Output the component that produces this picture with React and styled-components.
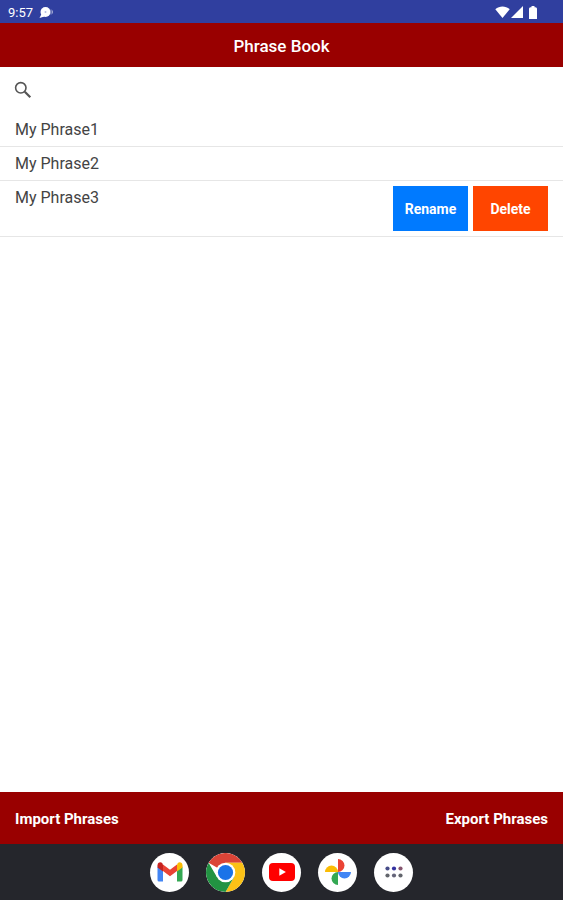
import React, { useState } from "react";
import styled, { createGlobalStyle } from "styled-components";

const GlobalStyle = createGlobalStyle`
  *, *::before, *::after { box-sizing: border-box; }
  body {
    margin: 0;
    background: #fff;
    color: #444;
    font-family: Roboto, "Liberation Sans", sans-serif;
    font-size: 16px;
  }
  button, input { font: inherit; }
`;

const Screen = styled.div`
  display: flex;
  flex-direction: column;
  min-height: 100vh;
`;

const StatusBar = styled.div`
  display: flex;
  align-items: center;
  justify-content: space-between;
  height: 23px;
  padding: 1px 26px 0 8px;
  background: #303f9f;
  color: #fff;
  font-size: 13px;
`;

const StatusGroup = styled.div`
  display: flex;
  align-items: center;
  gap: ${({ $gap }) => $gap}px;

  svg { display: block; }
`;

const Header = styled.header`
  display: flex;
  align-items: center;
  justify-content: center;
  height: 44px;
  padding-top: 2px;
  background: #990000;
  color: #fff;
`;

const Title = styled.h1`
  margin: 0;
  font-size: 17px;
  font-weight: 500;
  line-height: 24px;
`;

const SearchBar = styled.label`
  display: flex;
  align-items: center;
  gap: 8px;
  height: 46px;
  padding: 0 14px;

  svg { flex: none; }
`;

const SearchInput = styled.input`
  flex: 1;
  min-width: 0;
  border: 0;
  outline: 0;
  background: transparent;
  color: inherit;
`;

const PhraseList = styled.ul`
  flex: 1;
  margin: 0;
  padding: 0;
  list-style: none;
`;

const PhraseRow = styled.li`
  display: flex;
  align-items: flex-start;
  justify-content: space-between;
  padding: 5px 15px;
  border-bottom: 1px solid #e6e6e6;
`;

const PhraseName = styled.span`
  line-height: 23px;
`;

const RowActions = styled.div`
  display: flex;
  gap: 5px;
`;

const ActionButton = styled.button`
  width: 75px;
  height: 45px;
  padding: 0;
  border: 0;
  background: ${({ $color }) => $color};
  color: #fff;
  font-size: 14px;
  font-weight: 700;
`;

const Footer = styled.footer`
  display: flex;
  align-items: center;
  justify-content: space-between;
  height: 52px;
  padding: 2px 15px 0;
  background: #990000;
`;

const FooterButton = styled.button`
  padding: 0;
  border: 0;
  background: transparent;
  color: #fff;
  font-size: 15px;
  font-weight: 700;
  line-height: 24px;
`;

const Dock = styled.nav`
  display: flex;
  align-items: center;
  justify-content: center;
  gap: 17px;
  height: 56px;
  background: #25262c;
`;

const DockButton = styled.button`
  display: grid;
  place-items: center;
  width: 39px;
  height: 39px;
  padding: 0;
  overflow: hidden;
  border: 0;
  border-radius: 50%;
  background: #fff;

  svg { display: block; }
`;

const NotificationIcon = () => (
  <svg width="14" height="13" viewBox="0 0 14 13" fill="#fff" aria-hidden="true">
    <circle cx="6.5" cy="6" r="5" />
    <path d="M2.5 8 0.5 12 5.5 10.5z" />
    <circle cx="6.5" cy="6" r="1" fill="#b5bbdf" />
    <path d="M12 3.500v5M13.500 4.500v3" stroke="#98a0cf" strokeWidth="1" />
  </svg>
);

const WifiIcon = () => (
  <svg width="15" height="12" viewBox="0 0 15 12" fill="#fff" aria-hidden="true">
    <path d="M.3 3.2C4.5-.5 10.5-.5 14.7 3.2L7.5 12z" />
  </svg>
);

const SignalIcon = () => (
  <svg width="12" height="12" viewBox="0 0 12 12" fill="#fff" aria-hidden="true">
    <path d="M12 0v12H0z" />
  </svg>
);

const BatteryIcon = () => (
  <svg width="8" height="13" viewBox="0 0 8 13" fill="#fff" aria-hidden="true">
    <path d="M2.5 0h3v1.3h1Q8 1.3 8 2.8V13H0V2.8Q0 1.3 1.5 1.3h1z" />
  </svg>
);

const SearchIcon = () => (
  <svg width="18" height="18" viewBox="0 0 18 18" fill="none" stroke="#555" aria-hidden="true">
    <circle cx="6.8" cy="6.8" r="5.2" strokeWidth="1.6" />
    <path d="m10.8 10.8 5.5 5.5" strokeWidth="2.2" />
  </svg>
);

const GmailIcon = () => (
  <svg width="26" height="20" viewBox="0 0 26 20" aria-hidden="true">
    <path d="M.5 4.5 6 8.5v11H2Q.5 19.5.5 18z" fill="#4285f4" />
    <path d="M20 8.5 25.5 4.5V18q0 1.5-1.5 1.5h-4z" fill="#34a853" />
    <path d="M20 3v6.5l5.500-4V3.200C25.500.7 22.800-.6 20.800 1z" fill="#fbbc04" />
    <path d="M6 3v6.500L.5 5.500V3.200C.5.7 3.200-.6 5.200 1z" fill="#c5221f" />
    <path d="m6 2.500 7 5.300 7-5.300v6.500l-7 5.300L6 9z" fill="#ea4335" />
  </svg>
);

const ChromeIcon = () => (
  <svg width="39" height="39" viewBox="0 0 39 39" aria-hidden="true">
    <path d="M19.5 19.5 2.6 9.75A19.5 19.5 0 0 1 36.4 9.75H19.5z" fill="#db4437" />
    <path d="M19.5 9.75h16.9A19.5 19.5 0 0 1 19.5 39l8.440-14.630z" fill="#fbc116" />
    <path d="M2.6 9.75A19.5 19.5 0 0 0 19.5 39l8.440-14.630L19.500 19.500l-8.440 4.870z" fill="#229342" />
    <circle cx="19.5" cy="19.5" r="9.8" fill="#fff" />
    <circle cx="19.5" cy="19.5" r="7.6" fill="#1a73e8" />
  </svg>
);

const YouTubeIcon = () => (
  <svg width="26" height="18" viewBox="0 0 26 18" aria-hidden="true">
    <rect width="26" height="18" rx="4" fill="#f00" />
    <path d="M10.3 5.2v7.6l6.6-3.8z" fill="#fff" />
  </svg>
);

const PhotosIcon = () => (
  <svg width="28" height="28" viewBox="0 0 28 28" aria-hidden="true">
    <path d="M14 14V1a6.5 6.5 0 0 1 0 13z" fill="#ea4335" />
    <path d="M14 14h13a6.5 6.5 0 0 1-13 0z" fill="#4285f4" />
    <path d="M14 14v13a6.5 6.5 0 0 1 0-13z" fill="#34a853" />
    <path d="M14 14H1a6.5 6.5 0 0 1 13 0z" fill="#fbbc04" />
  </svg>
);

const AppsIcon = () => (
  <svg width="20" height="12" viewBox="0 0 20 12" aria-hidden="true">
    <circle cx="3.5" cy="2.5" r="2.1" fill="#474d89" />
    <circle cx="10" cy="2.5" r="2.1" fill="#3432a0" />
    <circle cx="16.5" cy="2.5" r="2.1" fill="#86566f" />
    <circle cx="3.5" cy="9.5" r="2.1" fill="#62656c" />
    <circle cx="10" cy="9.5" r="2.1" fill="#65657a" />
    <circle cx="16.5" cy="9.5" r="2.1" fill="#62656c" />
  </svg>
);

const phrases = [
  { name: "My Phrase1" },
  { name: "My Phrase2" },
  { name: "My Phrase3", open: true },
];

const apps = [
  { name: "Gmail", Icon: GmailIcon },
  { name: "Chrome", Icon: ChromeIcon },
  { name: "YouTube", Icon: YouTubeIcon },
  { name: "Photos", Icon: PhotosIcon },
  { name: "All apps", Icon: AppsIcon },
];

export default function App() {
  const [query, setQuery] = useState("");
  const visible = phrases.filter(({ name }) =>
    name.toLowerCase().includes(query.toLowerCase())
  );

  return (
    <Screen>
      <GlobalStyle />
      <StatusBar>
        <StatusGroup $gap={6}>
          <span>9:57</span>
          <NotificationIcon />
        </StatusGroup>
        <StatusGroup $gap={1}>
          <WifiIcon />
          <StatusGroup $gap={6}>
            <SignalIcon />
            <BatteryIcon />
          </StatusGroup>
        </StatusGroup>
      </StatusBar>
      <Header>
        <Title>Phrase Book</Title>
      </Header>
      <SearchBar>
        <SearchIcon />
        <SearchInput
          type="search"
          aria-label="Search phrases"
          value={query}
          onChange={(event) => setQuery(event.target.value)}
        />
      </SearchBar>
      <PhraseList>
        {visible.map(({ name, open }) => (
          <PhraseRow key={name}>
            <PhraseName>{name}</PhraseName>
            {open && (
              <RowActions>
                <ActionButton type="button" $color="#007aff">Rename</ActionButton>
                <ActionButton type="button" $color="#ff4500">Delete</ActionButton>
              </RowActions>
            )}
          </PhraseRow>
        ))}
      </PhraseList>
      <Footer>
        <FooterButton type="button">Import Phrases</FooterButton>
        <FooterButton type="button">Export Phrases</FooterButton>
      </Footer>
      <Dock aria-label="Apps">
        {apps.map(({ name, Icon }) => (
          <DockButton key={name} type="button" aria-label={name}>
            <Icon />
          </DockButton>
        ))}
      </Dock>
    </Screen>
  );
}
